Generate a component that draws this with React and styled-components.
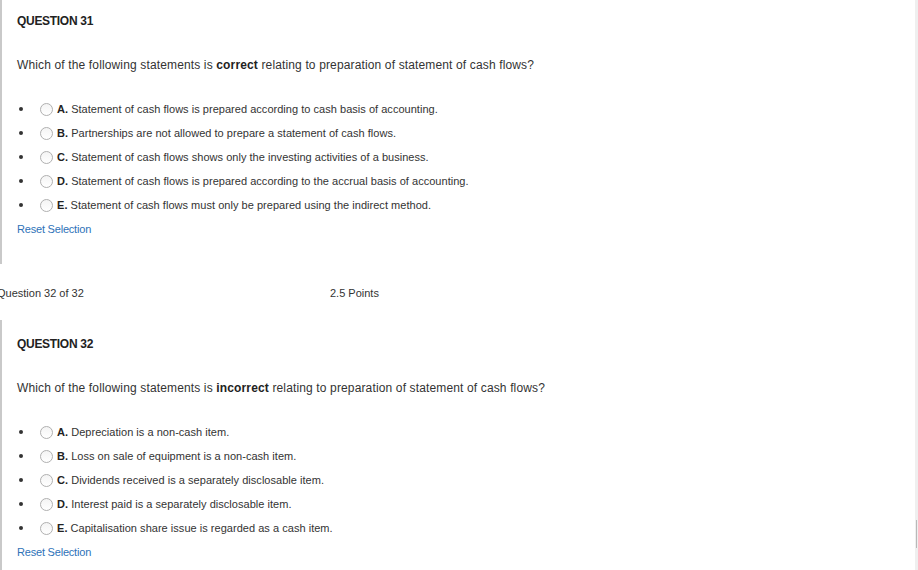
import React from "react";
import styled, { createGlobalStyle } from "styled-components";

const GlobalStyle = createGlobalStyle`
  html, body {
    margin: 0;
    padding: 0;
    background: #fff;
    overflow: hidden;
  }
  body {
    font-family: "Liberation Sans", Arial, sans-serif;
    color: #333;
  }
`;

const Page = styled.div`
  display: flex;
  width: 918px;
  height: 570px;
  overflow: hidden;
`;

const Content = styled.div`
  flex: 1;
  margin-top: -3px;
`;

const ScrollTrack = styled.div`
  width: 3px;
  height: 570px;
  background: #efefef;
  padding-top: 520px;
  box-sizing: border-box;
`;

const ScrollThumb = styled.div`
  width: 1px;
  height: 28px;
  margin-left: 1px;
  background: #b9b9b9;
`;

const Block = styled.div`
  border-left: 2px solid #c9c9c9;
  padding: 16px 0 ${({ $last }) => ($last ? "40px" : "27px")} 15px;
`;

const Title = styled.div`
  font-size: 12px;
  line-height: 16px;
  font-weight: bold;
  letter-spacing: -0.3px;
  color: #222;
`;

const Prompt = styled.div`
  margin-top: 28px;
  font-size: 12px;
  line-height: 16px;
  letter-spacing: 0.14px;
  color: #333;

  b {
    color: #222;
  }
`;

const Options = styled.ul`
  list-style: none;
  margin: 24px 0 0;
  padding: 0;
`;

const Option = styled.li`
  display: flex;
  align-items: center;
  height: 24px;
  padding-left: 2px;
  font-size: 11px;
  letter-spacing: 0.03px;
  color: #333;
`;

const Bullet = styled.span`
  width: 4px;
  height: 4px;
  border-radius: 50%;
  background: #333;
  flex-shrink: 0;
`;

const Radio = styled.span`
  width: 11px;
  height: 11px;
  margin-left: 17px;
  border: 1px solid #b0b0b0;
  border-radius: 50%;
  background: linear-gradient(#f4f4f4, #fff);
  flex-shrink: 0;
`;

const Label = styled.span`
  margin-left: 4px;

  b {
    color: #222;
  }
`;

const Reset = styled.a`
  display: block;
  margin-top: 4px;
  font-size: 11px;
  line-height: 16px;
  letter-spacing: -0.2px;
  color: #2e72b8;
  text-decoration: none;
  cursor: pointer;
`;

const Meta = styled.div`
  display: grid;
  grid-template-columns: 333px auto;
  margin-left: -3px;
  padding: 21px 0 19px;
  font-size: 11px;
  line-height: 16px;
  color: #333;
`;

const questions = [
  {
    number: 31,
    keyword: "correct",
    options: [
      "Statement of cash flows is prepared according to cash basis of accounting.",
      "Partnerships are not allowed to prepare a statement of cash flows.",
      "Statement of cash flows shows only the investing activities of a business.",
      "Statement of cash flows is prepared according to the accrual basis of accounting.",
      "Statement of cash flows must only be prepared using the indirect method.",
    ],
  },
  {
    number: 32,
    keyword: "incorrect",
    options: [
      "Depreciation is a non-cash item.",
      "Loss on sale of equipment is a non-cash item.",
      "Dividends received is a separately disclosable item.",
      "Interest paid is a separately disclosable item.",
      "Capitalisation share issue is regarded as a cash item.",
    ],
  },
];

const letters = ["A", "B", "C", "D", "E"];

const Question = ({ q, last }) => (
  <Block $last={last}>
    <Title>QUESTION {q.number}</Title>
    <Prompt>
      Which of the following statements is <b>{q.keyword}</b> relating to
      preparation of statement of cash flows?
    </Prompt>
    <Options>
      {q.options.map((text, i) => (
        <Option key={i}>
          <Bullet />
          <Radio />
          <Label>
            <b>{letters[i]}.</b> {text}
          </Label>
        </Option>
      ))}
    </Options>
    <Reset>Reset Selection</Reset>
  </Block>
);

const App = () => {
  return (
    <Page>
      <GlobalStyle />
      <Content>
        <Question q={questions[0]} />
        <Meta>
          <span>Question 32 of 32</span>
          <span>2.5 Points</span>
        </Meta>
        <Question q={questions[1]} last />
      </Content>
      <ScrollTrack>
        <ScrollThumb />
      </ScrollTrack>
    </Page>
  );
};

export default App;
